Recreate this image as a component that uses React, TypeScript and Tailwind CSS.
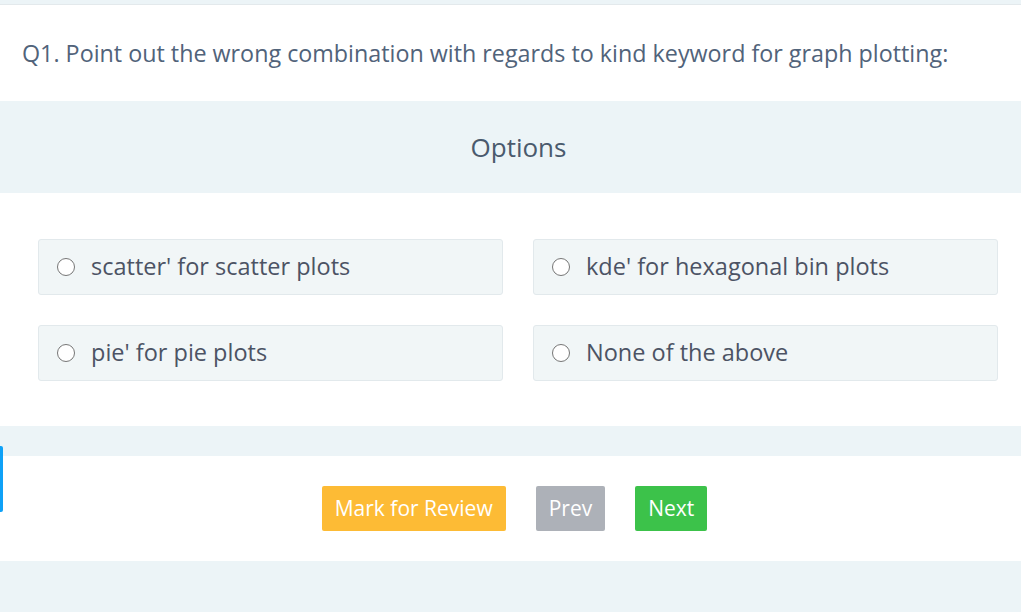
const options = [
  "scatter' for scatter plots",
  "kde' for hexagonal bin plots",
  "pie' for pie plots",
  "None of the above",
];

const Option = ({ label }: { label: string }) => {
  return (
    <label className="flex h-[56px] items-center rounded-[3px] border border-[#e2e9ec] bg-[#f1f6f7] pl-[18px]">
      <span className="h-[18px] w-[18px] shrink-0 rounded-full border-[1.5px] border-[#767676] bg-white" />
      <span className="ml-[16px] text-[23.5px] text-[#4c5364]">{label}</span>
    </label>
  );
};

const App = () => {
  return (
    <div className="relative h-[612px] w-[1021px] overflow-hidden bg-[#ecf4f7] font-['Open_Sans',sans-serif]">
      <div className="h-[4px]" />
      <div className="h-[97px] border-t border-[#e3e9ec] bg-white pl-[22px] pt-[33px]">
        <p className="text-[23.3px] leading-[30px] text-[#51637a]">
          Q1. Point out the wrong combination with regards to kind keyword for graph plotting:
        </p>
      </div>
      <div className="flex h-[92px] items-center justify-center pl-[16px]">
        <h2 className="text-[26px] text-[#4a5a6d]">Options</h2>
      </div>
      <div className="grid h-[233px] grid-cols-2 content-start gap-x-[30px] gap-y-[30px] bg-white px-[38px] pt-[46px] pr-[23px]">
        {options.map((o) => (
          <Option key={o} label={o} />
        ))}
      </div>
      <div className="h-[30px]" />
      <div className="flex h-[105px] items-center justify-center gap-[30px] bg-white pl-[8px]">
        <button className="h-[45px] rounded-[2px] bg-[#fdbb35] px-[13px] text-[21px] text-white">
          Mark for Review
        </button>
        <button className="h-[45px] rounded-[2px] bg-[#adb1b8] px-[13px] text-[21px] text-white">
          Prev
        </button>
        <button className="h-[45px] rounded-[2px] bg-[#3cc24a] px-[13px] text-[21px] text-white">
          Next
        </button>
      </div>
      <div className="absolute left-0 top-[446px] h-[66px] w-[3px] rounded-r-[2px] bg-[#0ea1f7]" />
    </div>
  );
};

export default App;
